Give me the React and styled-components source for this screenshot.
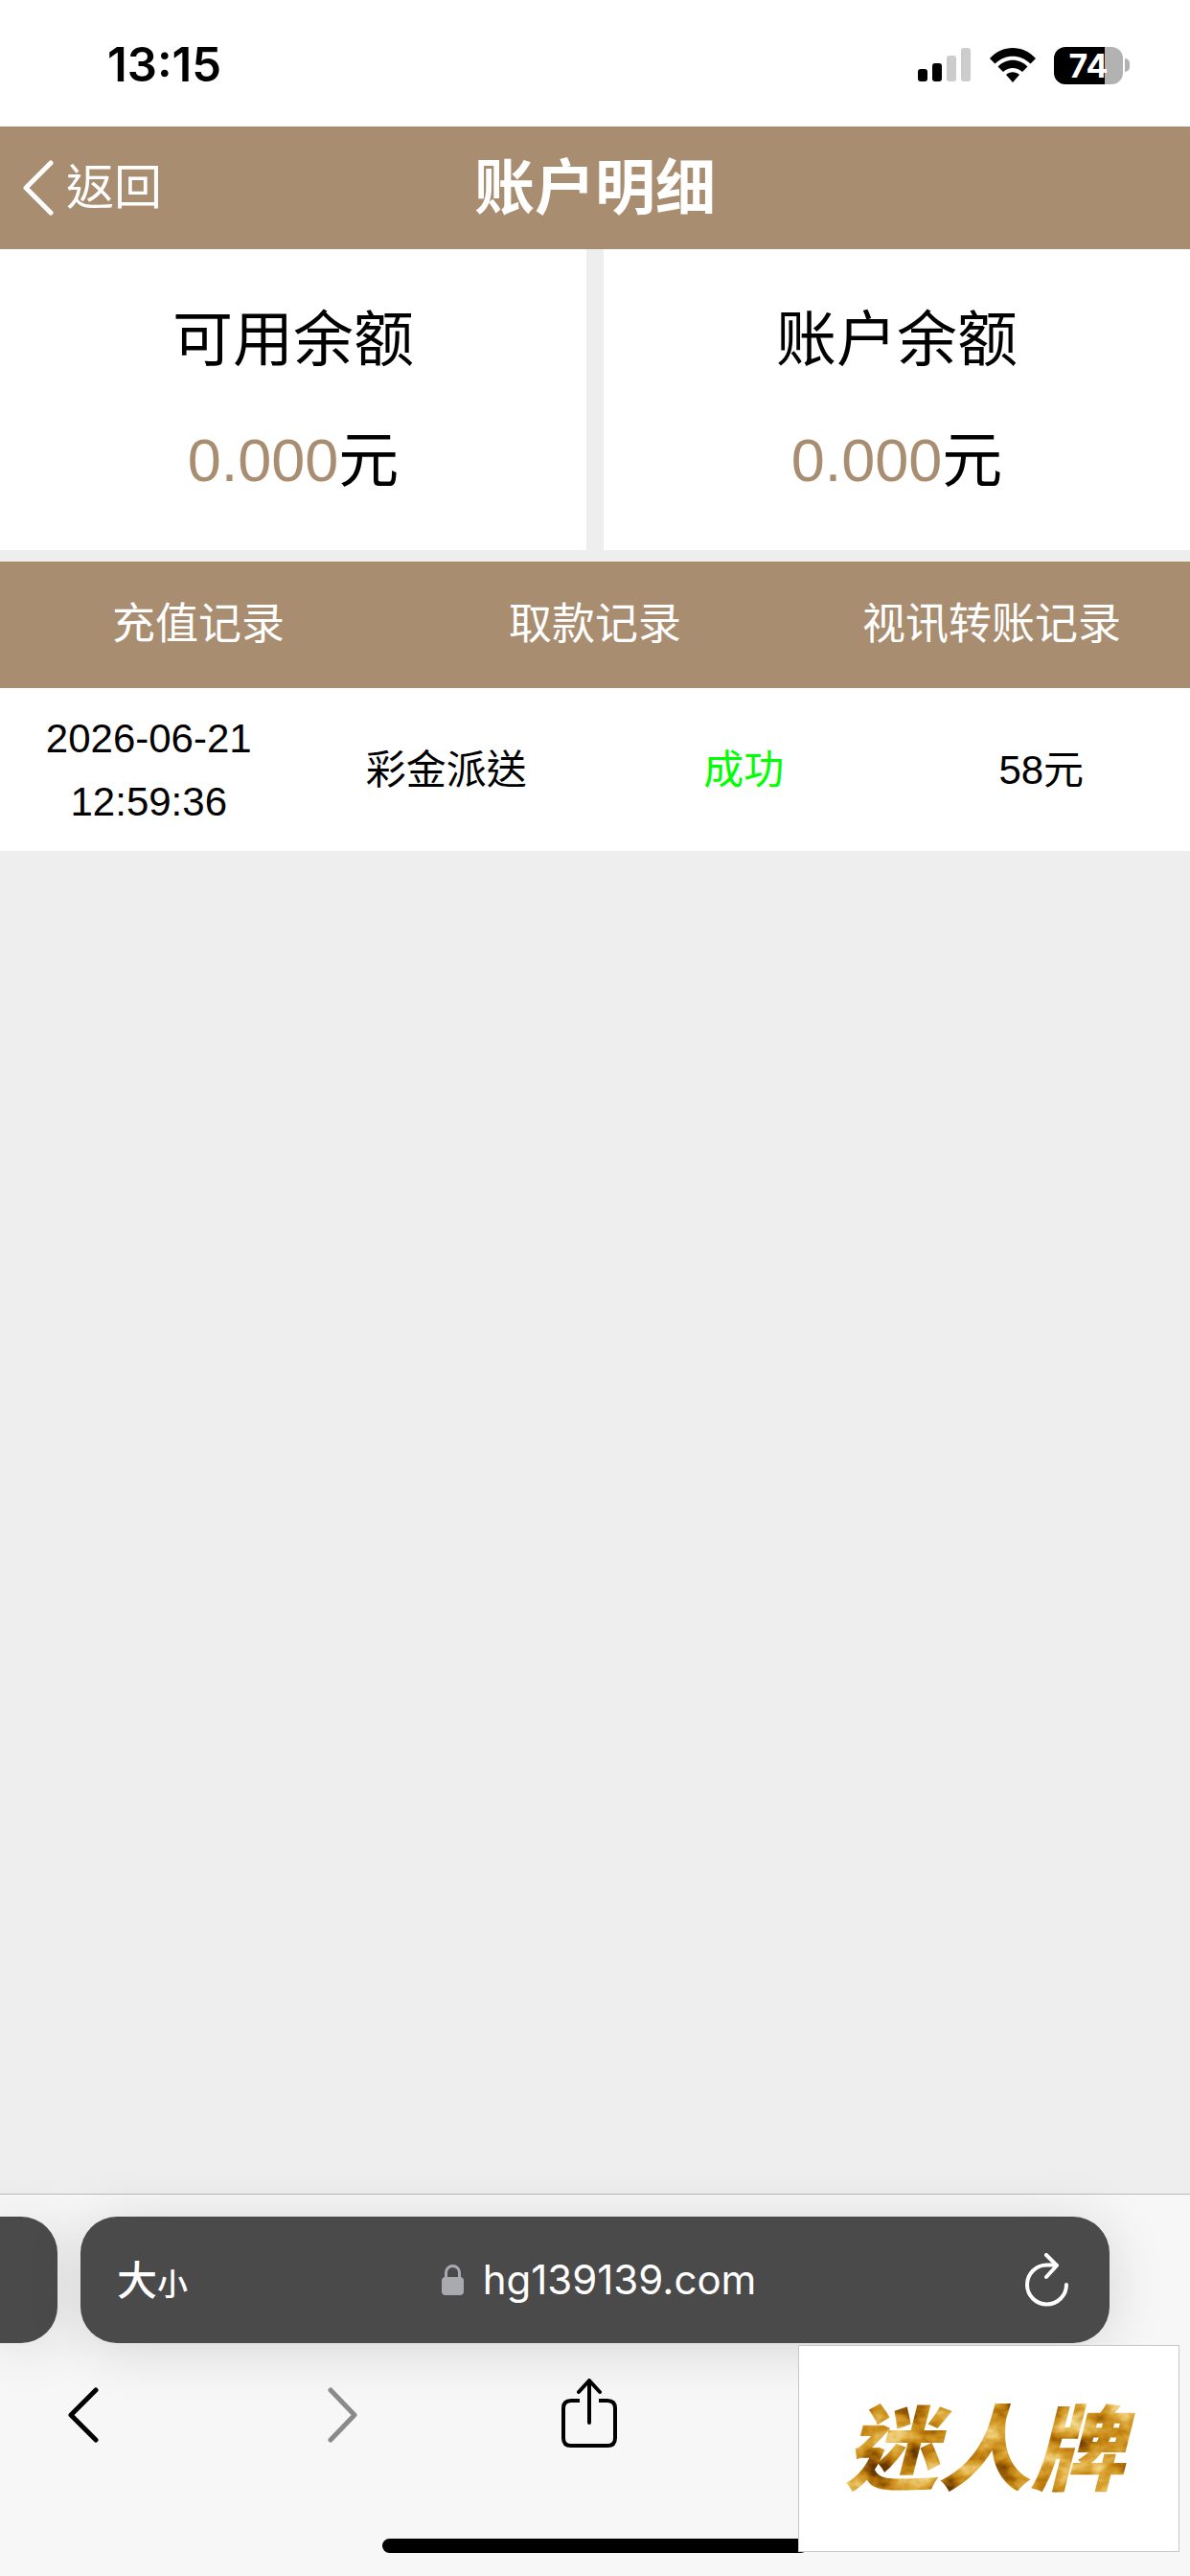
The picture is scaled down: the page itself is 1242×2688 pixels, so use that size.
import { useState } from "react";
import styled, { createGlobalStyle } from "styled-components";

const GlobalStyle = createGlobalStyle`
    body {
        margin: 0;
        background: #eee;
        color: #000;
        font-family: "Liberation Sans", "Noto Sans CJK SC", sans-serif;
    }
    p, h1 {
        margin: 0;
    }
    button {
        border: 0;
        padding: 0;
        background: transparent;
        color: inherit;
        font: inherit;
        cursor: pointer;
    }
    a {
        color: inherit;
        text-decoration: none;
    }
    svg {
        display: block;
        flex: none;
    }
`;

const Page = styled.div`
    display: flex;
    flex-direction: column;
    min-height: 100vh;
`;

const StatusBar = styled.div`
    display: flex;
    align-items: center;
    justify-content: space-between;
    height: 132px;
    padding: 0 62px 0 112px;
    box-sizing: border-box;
    background: #fff;
`;

const Time = styled.span`
    font: 600 49px/60px Inter, sans-serif;
    padding-top: 4px;
`;

const IconGroup = styled.div`
    display: flex;
    align-items: center;
    gap: 19px;
    padding-top: 4px;
`;

const Battery = styled.div`
    position: relative;
    width: 72px;
    height: 39px;
    margin-right: 8px;
    border-radius: 12px;
    background: linear-gradient(to right, #000 74%, #b2b2b2 74%);
    color: #fff;
    font: 700 34px/39px Inter, sans-serif;
    text-align: center;
    &::after {
        content: "";
        position: absolute;
        left: 74px;
        top: 12px;
        width: 5px;
        height: 14px;
        border-radius: 0 8px 8px 0;
        background: #b2b2b2;
    }
`;

const Header = styled.header`
    display: grid;
    grid-template-columns: 1fr auto 1fr;
    align-items: center;
    height: 128px;
    background: #a98d70;
    color: #fff;
`;

const BackLink = styled.a`
    display: flex;
    align-items: center;
    gap: 12px;
    padding-left: 24px;
    font-family: "Liberation Sans", "Noto Sans CJK TC", sans-serif;
    font-size: 50px;
    line-height: 60px;
`;

const Title = styled.h1`
    font-size: 63px;
    line-height: 90px;
    font-weight: 700;
`;

const Main = styled.main`
    flex: 1;
`;

const Balances = styled.section`
    display: grid;
    grid-template-columns: 1fr 1fr;
    gap: 18px;
    margin-bottom: 12px;
`;

const BalanceCard = styled.div`
    padding: 31px 0;
    background: #fff;
    text-align: center;
    font-size: 63px;
    line-height: 126px;
`;

const Amount = styled.span`
    color: #a98d70;
`;

const Tabs = styled.nav`
    display: grid;
    grid-template-columns: repeat(3, 1fr);
    background: #a98d70;
`;

const Tab = styled.button`
    && {
        color: #fff;
        font-size: 45px;
        line-height: 132px;
    }
`;

const Records = styled.table`
    width: 100%;
    table-layout: fixed;
    border-collapse: collapse;
    background: #fff;
    font-family: "Liberation Sans", "Noto Sans CJK TC", sans-serif;
`;

const Cell = styled.td`
    padding: 20px 24px 18px;
    color: ${({ $color }) => $color || '#000'};
    font-size: 42px;
    line-height: 66px;
    text-align: center;
`;

const BrowserBar = styled.footer`
    position: relative;
    border-top: 1px solid #bbb;
    background: #f7f7f7;
    padding: 23px 0 24px;
`;

const AddressRow = styled.div`
    display: flex;
    gap: 24px;
    padding-right: 84px;
`;

const PreviousTab = styled.div`
    width: 60px;
    border-radius: 0 38px 38px 0;
    background: #4a4a4a;
    box-shadow: 0 6px 60px rgba(0, 0, 0, 0.12);
`;

const AddressBar = styled.div`
    flex: 1;
    display: grid;
    grid-template-columns: 1fr auto 1fr;
    align-items: center;
    height: 132px;
    padding: 0 42px 0 38px;
    box-sizing: border-box;
    border-radius: 38px;
    background: #4a4a4a;
    box-shadow: 0 6px 60px rgba(0, 0, 0, 0.14);
    color: #fff;
    & > :last-child {
        justify-self: end;
    }
`;

const TextSizeButton = styled.button`
    && {
        justify-self: start;
        font: 500 42px/60px "Noto Sans CJK SC", sans-serif;
    }
    small {
        font-size: 32px;
    }
`;

const Address = styled.div`
    display: flex;
    align-items: center;
    gap: 20px;
    padding-left: 12px;
    font: 400 42px/60px Inter, sans-serif;
`;

const IconButton = styled.button`
    display: grid;
    place-items: center;
    &:disabled {
        color: #8a8a8a;
    }
`;

const NavRow = styled.nav`
    display: grid;
    grid-template-columns: 174fr 366fr 150fr 552fr;
    height: 150px;
`;

const HomeIndicator = styled.div`
    width: 444px;
    max-width: 100%;
    height: 15px;
    margin: 54px auto 0;
    border-radius: 8px;
    background: #000;
`;

const Promo = styled.a`
    position: absolute;
    right: 11px;
    bottom: 25px;
    display: grid;
    place-items: center;
    width: 396px;
    height: 214px;
    border: 1px solid #c8c8c8;
    background: #fff;
`;

const LogoText = styled.text`
    font: italic 900 97px "Noto Sans CJK TC", sans-serif;
`;

const balances = [
    { label: "可用余额", amount: "0.000" },
    { label: "账户余额", amount: "0.000" },
]

const tabs = ["充值记录", "取款记录", "视讯转账记录"]

const records = [
    { date: "2026-06-21 12:59:36", type: "彩金派送", status: "成功", amount: "58元" },
]

const StatusIcons = () => (
    <IconGroup>
        <svg width="56" height="36" viewBox="0 0 56 36">
            <rect x="0" y="22" width="10" height="13" rx="3" />
            <rect x="15" y="16" width="10" height="19" rx="3" />
            <rect x="30" y="8" width="10" height="27" rx="3" fill="#ccc" />
            <rect x="45" y="0" width="10" height="35" rx="3" fill="#ccc" />
        </svg>
        <svg width="48" height="37" viewBox="0 0 48 37">
            <path d="M0 11C13-3.600 35-3.600 48 11L42.500 16.500C32 6 16 6 5.500 16.500Z" />
            <path d="M8.500 19.500C17 10.500 31 10.500 39.500 19.500L34 25C28 19.500 20 19.500 14 25Z" />
            <path d="M17 28C21 24.300 27 24.300 31 28L24 36Z" />
        </svg>
        <Battery>
            <span>74</span>
        </Battery>
    </IconGroup>
)

const Chevron = ({ flip }) => (
    <svg width="33" height="58" viewBox="0 0 33 58" fill="none" stroke="currentColor" strokeWidth="5" strokeLinecap="round" strokeLinejoin="round">
        <path d={flip ? "M4 3L29 29L4 55" : "M29 3L3 29L29 55"} />
    </svg>
)

const GoldLogo = () => (
    <svg width="340" height="170" viewBox="0 0 340 170" role="img" aria-label="迷人牌">
        <defs>
            <filter id="gold" x="0" y="0" width="100%" height="100%" colorInterpolationFilters="sRGB">
                <feTurbulence type="fractalNoise" baseFrequency="0.025 0.035" numOctaves="4" seed="8" />
                <feColorMatrix values="1.6 0 0 0 -0.3  1.6 0 0 0 -0.3  1.6 0 0 0 -0.3  0 0 0 0 1" />
                <feComponentTransfer result="foil">
                    <feFuncR type="table" tableValues="0.4 0.62 0.78 0.85 0.93 0.97" />
                    <feFuncG type="table" tableValues="0.22 0.38 0.53 0.64 0.78 0.9" />
                    <feFuncB type="table" tableValues="0 0.02 0.08 0.2 0.42 0.65" />
                </feComponentTransfer>
                <feComposite in="foil" in2="SourceAlpha" operator="in" />
            </filter>
        </defs>
        <LogoText x="20" y="121" filter="url(#gold)">迷人牌</LogoText>
    </svg>
)

const App = () => {
    const [active, setActive] = useState(0)

    return (
        <Page>
            <GlobalStyle />
            <StatusBar>
                <Time>13:15</Time>
                <StatusIcons />
            </StatusBar>
            <Header>
                <BackLink href="#back">
                    <Chevron />
                    返回
                </BackLink>
                <Title>账户明细</Title>
            </Header>
            <Main>
                <Balances>
                    {balances.map(({ label, amount }) => (
                        <BalanceCard key={label}>
                            <p>{label}</p>
                            <p><Amount>{amount}</Amount>元</p>
                        </BalanceCard>
                    ))}
                </Balances>
                <Tabs>
                    {tabs.map((tab, index) => (
                        <Tab key={tab} aria-pressed={index === active} onClick={() => setActive(index)}>{tab}</Tab>
                    ))}
                </Tabs>
                <Records>
                    <tbody>
                        {records.map(({ date, type, status, amount }) => (
                            <tr key={date}>
                                <Cell>{date}</Cell>
                                <Cell>{type}</Cell>
                                <Cell $color="#00ff00">{status}</Cell>
                                <Cell>{amount}</Cell>
                            </tr>
                        ))}
                    </tbody>
                </Records>
            </Main>
            <BrowserBar>
                <AddressRow>
                    <PreviousTab />
                    <AddressBar>
                        <TextSizeButton aria-label="大小">大<small>小</small></TextSizeButton>
                        <Address>
                            <svg width="23" height="33" viewBox="0 0 23 33">
                                <path d="M4.500 15V8.500a7 7 0 0 1 14 0V15" fill="none" stroke="#a9a9b0" strokeWidth="3" />
                                <rect x="0" y="13" width="23" height="19" rx="4" fill="#a9a9b0" />
                            </svg>
                            hg139139.com
                        </Address>
                        <IconButton aria-label="刷新">
                            <svg width="46" height="56" viewBox="0 0 46 56" fill="none" stroke="#fff" strokeWidth="4" strokeLinecap="round" strokeLinejoin="round">
                                <path d="M43 33A20.500 20.500 0 1 1 22.500 12.500H32" />
                                <path d="M22 2L33 13L22 25" />
                            </svg>
                        </IconButton>
                    </AddressBar>
                </AddressRow>
                <NavRow>
                    <IconButton aria-label="后退"><Chevron /></IconButton>
                    <IconButton aria-label="前进" disabled><Chevron flip /></IconButton>
                    <IconButton aria-label="分享">
                        <svg width="58" height="76" viewBox="0 0 58 76" fill="none" stroke="#000" strokeWidth="4" strokeLinecap="round" strokeLinejoin="round">
                            <path d="M19 23H10Q2 23 2 31V62Q2 70 10 70H48Q56 70 56 62V31Q56 23 48 23H39" strokeLinecap="butt" />
                            <path d="M29 46V3M18 14L29 2L40 14" />
                        </svg>
                    </IconButton>
                </NavRow>
                <HomeIndicator />
                <Promo href="#promo">
                    <GoldLogo />
                </Promo>
            </BrowserBar>
        </Page>
    )
}

export default App;
